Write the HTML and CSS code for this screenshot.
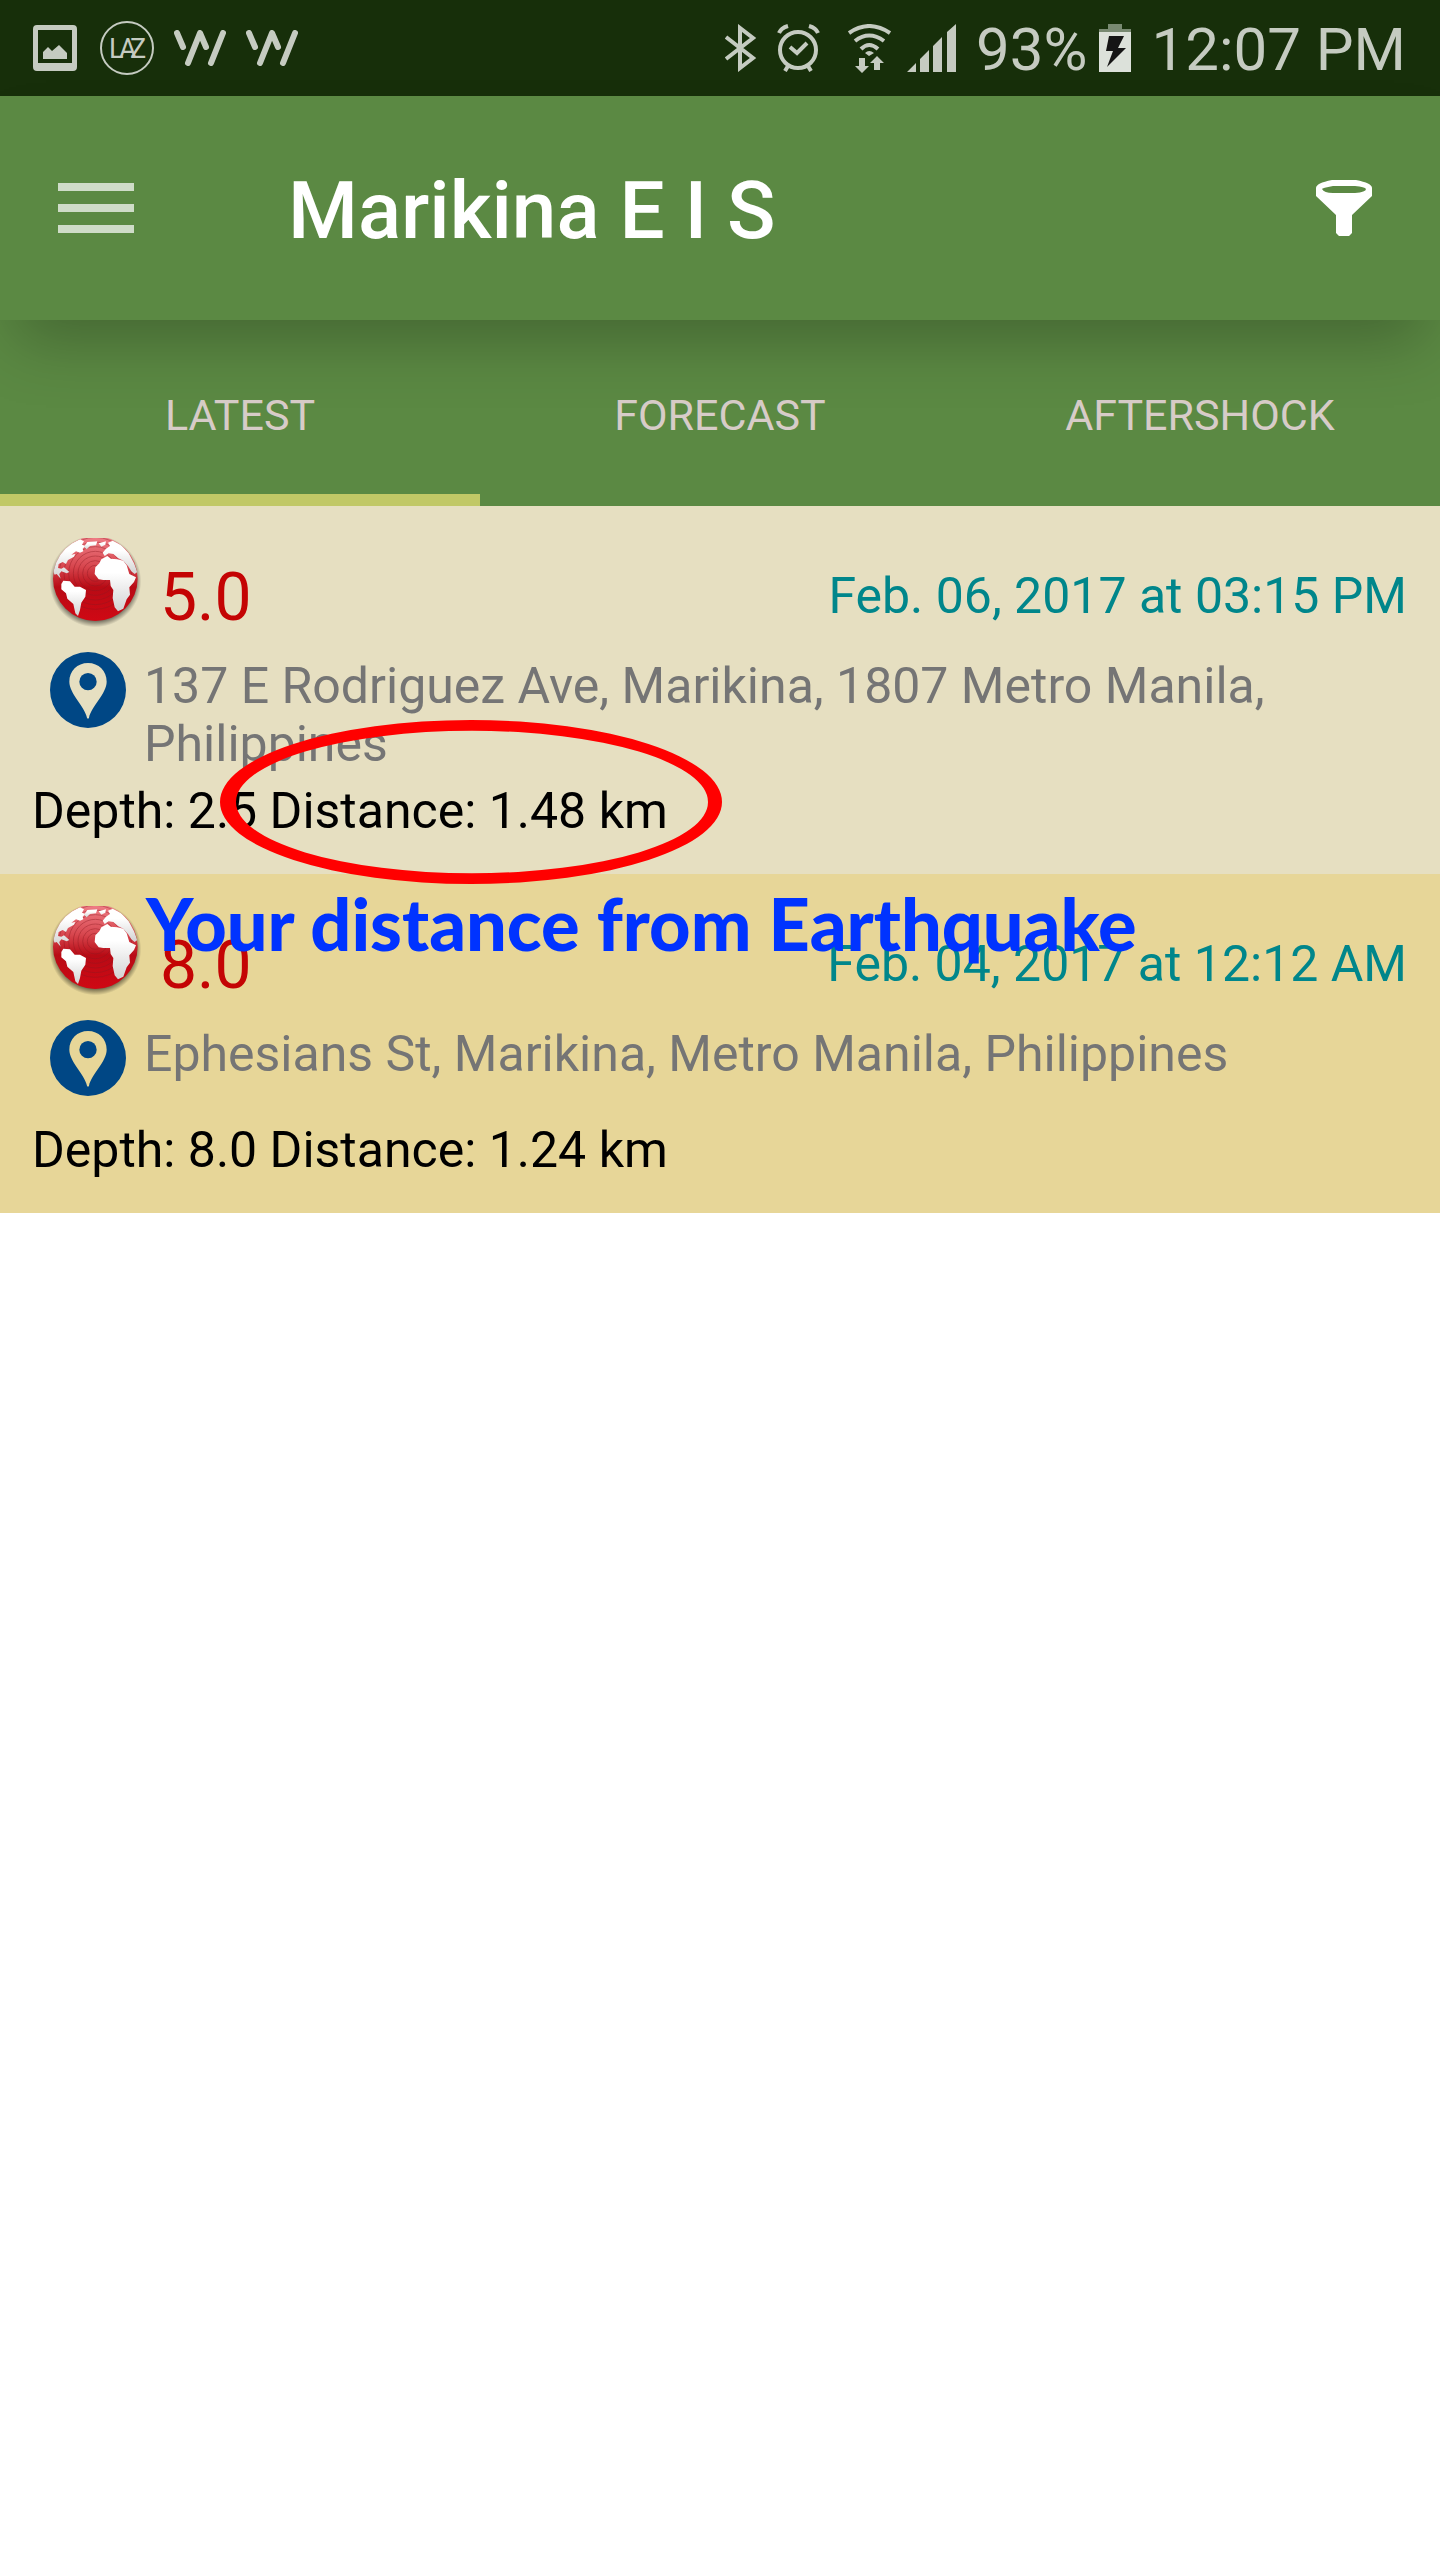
FILE: index.html
```html
<!DOCTYPE html>
<html lang="en">
<head>
<meta charset="utf-8">
<meta name="viewport" content="width=device-width, initial-scale=1">
<title>Marikina E I S</title>
<link rel="stylesheet" href="styles.css">
</head>
<body>
<svg class="defs" aria-hidden="true">
  <defs>
    <linearGradient id="sea" x1="0" y1="0" x2="0" y2="1">
      <stop offset="0" stop-color="#f08088"/>
      <stop offset="0.35" stop-color="#d84850"/>
      <stop offset="0.6" stop-color="#b80c16"/>
      <stop offset="1" stop-color="#d00814"/>
    </linearGradient>
    <linearGradient id="land" x1="0" y1="0" x2="0" y2="1">
      <stop offset="0.3" stop-color="#fff"/>
      <stop offset="1" stop-color="#d2d2d2"/>
    </linearGradient>
    <radialGradient id="shade">
      <stop offset="0.8" stop-color="#000" stop-opacity="0.7"/>
      <stop offset="1" stop-color="#000" stop-opacity="0"/>
    </radialGradient>
    <clipPath id="disc"><circle cx="286" cy="236" r="127"/></clipPath>
    <symbol id="globe" viewBox="150 114 276 270">
      <circle cx="286" cy="244" r="138" fill="url(#shade)"/>
      <circle cx="286" cy="236" r="127" fill="url(#sea)"/>
      <g fill="none" stroke="#8c1820" stroke-width="3" opacity="0.4" clip-path="url(#disc)">
        <circle cx="286" cy="220" r="24"/><circle cx="286" cy="220" r="38"/><circle cx="286" cy="220" r="52"/><circle cx="286" cy="220" r="66"/><circle cx="286" cy="220" r="80"/><circle cx="286" cy="220" r="94"/><circle cx="286" cy="220" r="108"/>
      </g>
      <g fill="url(#land)" clip-path="url(#disc)">
        <path d="M158 212L164 188L184 152L212 132L240 118L252 124L246 134L256 138L248 146L250 154L240 158L228 154L214 164L226 162L222 170L204 180L198 192L188 186L176 192L174 204L184 206L192 202L208 216L200 220L184 214L178 222L182 236L170 222L164 224Z"/>
        <path d="M252 140L262 126L292 124L288 136L270 138L260 148ZM296 130L318 124L316 134L304 140Z"/>
        <path d="M184 252L190 242L210 244L224 260L240 260L258 270L256 290L244 308L240 330L234 348L226 340L220 312L202 296L198 280L184 268Z"/>
        <path d="M308 158L318 146L330 138L324 128L338 122L364 136L386 160L402 190L412 216L404 222L394 214L384 198L370 182L354 174L340 162L326 160L314 168Z"/>
        <path d="M304 178L322 168L332 176L352 178L370 182L380 196L388 222L408 232L402 246L388 262L390 284L380 298L370 326L354 334L344 322L338 294L340 270L332 258L330 240L310 240L296 238L284 222L286 202L298 190Z"/>
      </g>
    </symbol>
    <symbol id="pin" viewBox="150 456 228 228">
      <path fill="#004785" fill-rule="evenodd" d="M264 456a114 114 0 1 1 0 228a114 114 0 1 1 0-228ZM264 489c-32 0-56 24-56 56c0 36 46 74 53 108q3 6 6 0c7-34 53-72 53-108c0-32-24-56-56-56Z"/>
      <circle cx="264" cy="545" r="26" fill="#004785"/>
    </symbol>
    <symbol id="wave" viewBox="0 0 52 36">
      <path fill="none" stroke="#c5cbc1" stroke-width="6" stroke-linecap="round" stroke-linejoin="round" d="M3 3L9 17M14 33L26 3L32 17M37 33L49 3"/>
    </symbol>
  </defs>
</svg>

<header class="status">
  <div class="status-group notices">
    <svg class="picture" width="44" height="46" viewBox="0 0 44 46" fill="#c5cbc1" aria-hidden="true"><path fill-rule="evenodd" d="M4 0H40a4 4 0 0 1 4 4V42a4 4 0 0 1-4 4H4a4 4 0 0 1-4-4V4a4 4 0 0 1 4-4ZM5 5V38H39V5ZM10 34V27L15 22L19 26L26 20L34 28V34Z"/></svg>
    <svg width="54" height="54" viewBox="0 0 54 54" aria-hidden="true"><circle cx="27" cy="27" r="26" fill="none" stroke="#c5cbc1" stroke-width="2"/><text class="laz" x="9 19 30" y="37">LAZ</text></svg>
    <svg width="52" height="36" aria-hidden="true"><use href="#wave"/></svg>
    <svg width="52" height="36" aria-hidden="true"><use href="#wave"/></svg>
  </div>
  <div class="status-group system">
    <svg width="32" height="48" viewBox="0 0 32 48" fill="none" stroke="#c5cbc1" stroke-width="4" aria-hidden="true"><path d="M1 13L28 34L15 44V4L28 14L1 35"/></svg>
    <svg class="alarm" width="43" height="48" viewBox="0 0 43 48" fill="none" stroke="#c5cbc1" stroke-width="4" aria-hidden="true"><circle cx="21" cy="26" r="18"/><path d="M13 23L20 29L30 19M2 9Q4 4 11 2M32 2Q39 4 41 9M11 42L8 47M31 42L34 47"/></svg>
    <svg class="wifi" width="43" height="49" viewBox="0 0 43 49" fill="none" stroke="#c5cbc1" stroke-width="4" aria-hidden="true"><path d="M1 9Q21-5 42 9M7 17Q21 6 36 17M13 25Q21 17 30 25"/><path fill="#c5cbc1" stroke="none" d="M17 29Q21 25 26 29L21 32ZM11 34H17V42H21L14 49L7 42H11ZM26 46V39H22L29 32L36 39H32V46Z"/></svg>
    <svg width="49" height="48" viewBox="0 0 49 48" fill="#c5cbc1" aria-hidden="true"><path d="M0 48L9 39V48ZM13 48V35L22 26V48ZM26 48V22L35 13V48ZM40 48V8L49 0V48Z"/></svg>
    <span class="percent">93%</span>
    <svg width="32" height="48" viewBox="0 0 32 48" aria-hidden="true"><path fill="#788971" d="M9 0H23V5H32V9H0V5H9Z"/><path fill="#dce1da" d="M0 8H32V48H0Z"/><path fill="#151515" d="M10 12H25L19 24H27L8 43L14 27H7Z"/></svg>
    <span class="clock">12:07 PM</span>
  </div>
</header>

<div class="appbar">
  <button class="icon-button" type="button" aria-label="Menu">
    <svg width="76" height="50" viewBox="0 0 76 50" fill="#cfdcc8"><path d="M0 0H76V8H0ZM0 21H76V29H0ZM0 42H76V50H0Z"/></svg>
  </button>
  <h1>Marikina E I S</h1>
  <button class="icon-button" type="button" aria-label="Filter">
    <svg width="56" height="56" viewBox="0 0 56 56" fill="#fff"><path fill-rule="evenodd" d="M16 0H40Q56 3 56 8V16L36 35V53L33 56H23L20 53V35L0 16V8Q0 3 16 0ZM17 6Q6 8 6 9Q8 13 17 13H39Q50 12 50 9Q49 7 39 6Z"/></svg>
  </button>
</div>

<nav class="tabs">
  <a class="tab active" href="#latest">LATEST</a>
  <a class="tab" href="#forecast">FORECAST</a>
  <a class="tab" href="#aftershock">AFTERSHOCK</a>
</nav>

<main id="latest">
  <article class="quake">
    <div class="summary">
      <svg class="globe" width="92" height="90" aria-hidden="true"><use href="#globe"/></svg>
      <strong class="magnitude">5.0</strong>
      <time datetime="2017-02-06T15:15">Feb. 06, 2017 at 03:15 PM</time>
    </div>
    <div class="place">
      <svg class="pin" width="76" height="76" aria-hidden="true"><use href="#pin"/></svg>
      <p class="address">137 E Rodriguez Ave, Marikina, 1807 Metro Manila, Philippines</p>
    </div>
    <p class="detail">Depth: 2.5 Distance: 1.48 km</p>
    <svg class="ring" width="502" height="164" viewBox="0 0 502 164" aria-hidden="true"><path fill="#f00" fill-rule="evenodd" d="M0 82a251 82 0 1 0 502 0a251 82 0 1 0-502 0ZM16 82a235 71 0 1 1 472 0a235 71 0 1 1-472 0Z"/></svg>
  </article>
  <article class="quake alternate">
    <div class="summary">
      <svg class="globe" width="92" height="90" aria-hidden="true"><use href="#globe"/></svg>
      <strong class="magnitude">8.0</strong>
      <time datetime="2017-02-04T00:12">Feb. 04, 2017 at 12:12 AM</time>
    </div>
    <div class="place">
      <svg class="pin" width="76" height="76" aria-hidden="true"><use href="#pin"/></svg>
      <p class="address">Ephesians St, Marikina, Metro Manila, Philippines</p>
    </div>
    <p class="detail">Depth: 8.0 Distance: 1.24 km</p>
    <p class="callout">Your distance from Earthquake</p>
  </article>
</main>
</body>
</html>
```
FILE: styles.css
```css
* {
  box-sizing: border-box;
}

body {
  margin: 0;
  background: #fff;
  color: #000;
  font-family: Roboto, "Liberation Sans", sans-serif;
  font-size: 50px;
  line-height: 58px;
}

h1,
p {
  margin: 0;
}

svg {
  display: block;
  flex: none;
}

.defs {
  position: absolute;
  width: 0;
  height: 0;
}

.status {
  display: flex;
  justify-content: space-between;
  align-items: center;
  height: 96px;
  padding: 0 34px 0 33px;
  background: #172f0a;
  color: #c5cbc1;
  font-size: 60px;
  white-space: nowrap;
}

.status-group {
  display: flex;
  align-items: center;
}

.notices {
  gap: 20px;
}

.picture {
  margin-right: 3px;
}

.system {
  gap: 16px;
}

.alarm {
  margin-left: 4px;
}

.wifi {
  margin-left: 12px;
}

.percent,
.clock {
  padding-top: 4px;
  margin-left: 4px;
}

.percent {
  margin-right: -4px;
}

.laz {
  fill: #c5cbc1;
  font-size: 27px;
}

.appbar {
  position: relative;
  z-index: 1;
  display: flex;
  align-items: center;
  height: 224px;
  padding: 0 68px 0 58px;
  background: #5b8943;
  box-shadow: 0 36px 60px -16px rgba(0, 0, 0, 0.25);
  color: #fff;
}

.appbar h1 {
  flex: 1;
  margin-left: 154px;
  padding-top: 6px;
  font-size: 80px;
  font-weight: 500;
  line-height: 96px;
}

.icon-button {
  padding: 0;
  border: 0;
  background: none;
}

.tabs {
  display: grid;
  grid-template-columns: repeat(3, 1fr);
  height: 186px;
  background: #5b8943;
}

.tab {
  display: flex;
  align-items: center;
  justify-content: center;
  padding-top: 16px;
  border-bottom: 12px solid transparent;
  color: #d7ccc8;
  font-size: 43px;
  text-decoration: none;
}

.tab.active {
  border-color: #c1c866;
}

.quake {
  position: relative;
  padding: 32px 33px 34px 32px;
  background: #e6dfc1;
}

.alternate {
  background: #e7d698;
}

.summary {
  display: flex;
  height: 110px;
  padding-left: 18px;
}

.magnitude {
  flex: 1;
  margin-left: 18px;
  color: #c40404;
  font-size: 66px;
  font-weight: 400;
  line-height: 120px;
}

.summary time {
  color: #00868b;
  line-height: 116px;
}

.place {
  display: flex;
  gap: 18px;
  min-height: 96px;
  padding-left: 18px;
}

.pin {
  margin-top: 4px;
}

.address {
  padding-top: 9px;
  color: #757575;
}

.detail {
  padding-top: 9px;
}

.ring {
  position: absolute;
  z-index: 1;
  top: 214px;
  left: 220px;
}

.callout {
  position: absolute;
  top: 4px;
  left: 146px;
  color: #03f;
  font-family: "Marker Felt", "Liberation Sans Narrow", Lato, sans-serif;
  font-size: 72px;
  font-weight: 900;
  line-height: 90px;
  white-space: nowrap;
}
```
